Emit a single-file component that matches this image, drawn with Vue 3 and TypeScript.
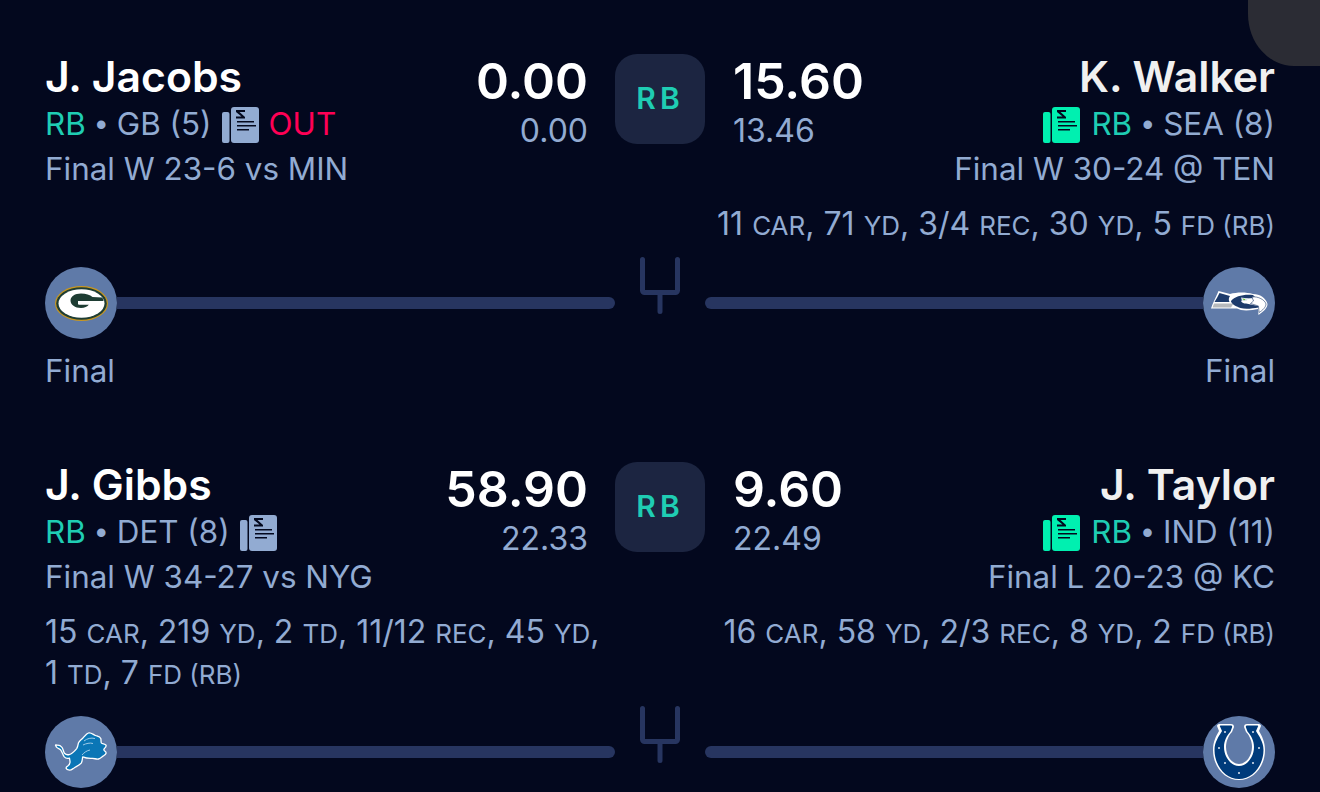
<script setup lang="ts">
interface StatPart {
  num: string
  unit?: string
}

interface Player {
  name: string
  team: string
  status?: string
  result: string
  score: string
  projected: string
  stats: StatPart[]
  logo: string
}

interface Matchup {
  pos: string
  home: Player
  away: Player
}

const matchups: Matchup[] = [
  {
    pos: 'RB',
    home: {
      name: 'J. Jacobs',
      team: 'GB (5)',
      status: 'OUT',
      result: 'Final W 23-6 vs MIN',
      score: '0.00',
      projected: '0.00',
      stats: [],
      logo: 'gb',
    },
    away: {
      name: 'K. Walker',
      team: 'SEA (8)',
      result: 'Final W 30-24 @ TEN',
      score: '15.60',
      projected: '13.46',
      stats: [
        { num: '11', unit: 'CAR' },
        { num: '71', unit: 'YD' },
        { num: '3/4', unit: 'REC' },
        { num: '30', unit: 'YD' },
        { num: '5', unit: 'FD (RB)' },
      ],
      logo: 'sea',
    },
  },
  {
    pos: 'RB',
    home: {
      name: 'J. Gibbs',
      team: 'DET (8)',
      result: 'Final W 34-27 vs NYG',
      score: '58.90',
      projected: '22.33',
      stats: [
        { num: '15', unit: 'CAR' },
        { num: '219', unit: 'YD' },
        { num: '2', unit: 'TD' },
        { num: '11/12', unit: 'REC' },
        { num: '45', unit: 'YD' },
        { num: '1', unit: 'TD' },
        { num: '7', unit: 'FD (RB)' },
      ],
      logo: 'det',
    },
    away: {
      name: 'J. Taylor',
      team: 'IND (11)',
      result: 'Final L 20-23 @ KC',
      score: '9.60',
      projected: '22.49',
      stats: [
        { num: '16', unit: 'CAR' },
        { num: '58', unit: 'YD' },
        { num: '2/3', unit: 'REC' },
        { num: '8', unit: 'YD' },
        { num: '2', unit: 'FD (RB)' },
      ],
      logo: 'ind',
    },
  },
]
</script>

<template>
  <div class="screen">
    <div class="corner"></div>

    <section v-for="(m, i) in matchups" :key="i" class="matchup">
      <div class="row">
        <div v-for="(p, side) in { home: m.home, away: m.away }" :key="side" class="player" :class="side">
          <div class="top">
            <div class="info">
              <div class="name">{{ p.name }}</div>
              <div class="meta">
                <svg v-if="side === 'away'" class="news mint" viewBox="0 0 37 36">
                  <rect x="0" y="5" width="7.5" height="31" rx="2" />
                  <rect x="9" y="0" width="28" height="36" rx="3" />
                  <path class="ink" d="M14 3h9v2h-5.500l5.500 5v1.500h-9v-2h5.500L14 5zM15 14h17v1.500H15zM15 18h19v1.500H15zM15 22h12v1.500H15z" />
                </svg>
                <span class="pos">RB</span>
                <span class="dot">•</span>
                <span>{{ p.team }}</span>
                <svg v-if="side === 'home'" class="news" viewBox="0 0 37 36">
                  <rect x="0" y="5" width="7.5" height="31" rx="2" />
                  <rect x="9" y="0" width="28" height="36" rx="3" />
                  <path class="ink" d="M14 3h9v2h-5.500l5.500 5v1.500h-9v-2h5.500L14 5zM15 14h17v1.500H15zM15 18h19v1.500H15zM15 22h12v1.500H15z" />
                </svg>
                <span v-if="p.status" class="out">{{ p.status }}</span>
              </div>
              <div class="result">{{ p.result }}</div>
            </div>
            <div class="points">
              <div class="score">{{ p.score }}</div>
              <div class="proj">{{ p.projected }}</div>
            </div>
          </div>
          <div v-if="p.stats.length" class="stats">
            <template v-for="(s, k) in p.stats" :key="k">
              {{ s.num }} <span class="unit">{{ s.unit }}</span>{{ k < p.stats.length - 1 ? ', ' : '' }}
            </template>
          </div>
        </div>
        <div class="badge">{{ m.pos }}</div>
      </div>

      <div class="track">
        <div class="side">
          <div class="logo">
            <svg v-if="m.home.logo === 'gb'" class="gb" viewBox="0 0 53 35">
              <ellipse cx="26.500" cy="17.500" rx="26.500" ry="17.500" fill="#c9971f" />
              <ellipse cx="26.500" cy="17.500" rx="25.300" ry="16.300" fill="#1e3d33" />
              <ellipse cx="26.500" cy="17.500" rx="23" ry="14.300" fill="#fff" />
              <path d="M26 7.500c5 0 9 1.300 11.500 3.500l9.500.5c1 1 1.500 2.500 1.500 3.500H23v3.500h11c-1.500 2-4.500 3.500-8 3.500-6 0-10.500-3.300-10.500-7.500S20 7.500 26 7.500z" fill="#1e3d33" />
              <path d="M24 15.500h24.500c0 1-.2 2-.7 3H24z" fill="#fff" />
            </svg>
            <svg v-else-if="m.home.logo === 'det'" class="det" viewBox="0 0 54 40">
              <path d="M1.500 13.500c2.500-.8 5 0 6.500 1.800 1.200 1.700 1.300 4.500 2.500 6 1.200 1.300 3.300 1.600 4.700 1.300 3-.6 5-3 7.500-6 1-1.500 1.300-3.300 1.700-5.600 1-2.500 3-3.300 4.500-5C31 3.500 33 1 35 .8c2.500-.3 4.500 2 6.500 2.700 2.300.8 4.500 1 5.300 3 .5 1.500-.2 3.300.7 4.600 1 1 3.700.5 4.500 2 .6 1.200-.7 2.500-1.500 3.300-.7.7-.8 1.500-.2 2.200.7.8 2 1.200 1.800 2.500-.2 1.400-1.800 2.200-3 3-1.300 1-2.700 2.500-4.600 2.900-2 .4-4.200-.7-6.300-.6-3.500.2-6.700-.3-9.500-1.500-.5 2-.2 4.500-1.500 6.300-2 2.500-5.500 3.500-7.500 5-1.300.8-2.500 2.200-4.200 2-1.500-.2-3-.6-3.400-1.900-.3-1.300.9-2 1.900-2.500 1.200-.8 1.800-2 2-3.500.2-1.500-.5-2.800-.5-4.200-1.800.6-4 .3-5.200-1.200-1.500-2-2-4.500-3.300-6.600-1-1.700-3.200-1.500-4.500-3.100-.5-.6-.7-1.500-.5-2.500z" fill="#0a76b6" stroke="#fff" stroke-width="1.300" stroke-linejoin="round" />
              <path d="M30 9c3-2.500 7-3.500 11-2.500M29 13c3-1.500 7-2.500 10-1.500M36 18c-3 .5-6 2.500-8 5" stroke="#9ccbe8" stroke-width="1" fill="none" />
            </svg>
          </div>
          <div class="bar"></div>
        </div>
        <svg class="post" viewBox="0 0 40 58">
          <path d="M2.500 3.500v31a2 2 0 0 0 2 2h31a2 2 0 0 0 2-2v-31M20 36.500v19" fill="none" stroke="#273560" stroke-width="5" stroke-linecap="round" />
        </svg>
        <div class="side">
          <div class="bar"></div>
          <div class="logo">
            <svg v-if="m.away.logo === 'sea'" class="sea" viewBox="0 0 57 24">
              <path d="M7.500 0L19 3c7-2 16-2 23 0 7 0 13 4 14.500 10 0 4-4.500 8-9 11l-.5-6c-5 1-11 2-17 1l-4-1.500H0C2 11.500 5 6 7.500 0z" fill="#fff" />
              <path d="M8.500 2L19 5c-1.500 2-1.500 4-.5 6H3.500c2-3 3.500-6 5-9z" fill="#1d3b6b" />
              <path d="M3 12.500h19.500L20 16.500H1.500z" fill="#b6b9bc" />
              <path d="M20 10c4-5 13-7 22-6l3 3-11 .5-4 2.500c1 2 3 2.500 5 2.500l12 2.500.5 1.500c-6 1-13 2-18 .5-4-1.500-8-3-9.500-6.500z" fill="#1d3b6b" />
              <path d="M30 6.500l7 1-1.500 2.500H31z" fill="#dfe6ee" />
              <path d="M31.500 7.500l3 .7-1.500 1.300z" fill="#5cc12a" />
              <path d="M41 6c6-1 13 3 14 7 0 3-3.500 6.500-7 8.500l-.5-6.500-8-2.500 3-2.500z" fill="#fff" stroke="#1d3b6b" stroke-width=".6" />
            </svg>
            <svg v-else-if="m.away.logo === 'ind'" class="ind" viewBox="0 0 54 58">
              <path d="M7 1h12c2 0 3 1 3 3l-2 5c-4 4-6 10-6 15 0 9 6 17 13 17s13-8 13-17c0-5-2-11-6-15l-2-5c0-2 1-3 3-3h12c1 0 2 1 2 2l-2 5c3 5 6 11 6 19 0 16-11 30-26 30S1 43 1 27C1 19 4 13 7 8L5 3c0-1 1-2 2-2z" fill="#fff" />
              <path d="M8.500 2.500h10c1.500 0 2 1 1.500 2l-1.500 4C14.500 13 12 18 12 24c0 10 7 19 15 19s15-9 15-19c0-6-2.500-11-6.500-15.500L34 4.500c-.5-1 0-2 1.500-2h10c.5 0 1 .5.500 1L44 8c3 5 7.500 11 7.500 19 0 15-10.500 29-24.500 29S2.500 42 2.500 27c0-8 4.500-14 7.500-19L8 3.500c-.5-.5 0-1 .5-1z" fill="#003b7b" />
              <g fill="#dfe7f0">
                <circle cx="13" cy="9" r="1" /><circle cx="41" cy="9" r="1" /><circle cx="7" cy="25" r="1" /><circle cx="47" cy="25" r="1" />
                <circle cx="13" cy="40" r="1" /><circle cx="41" cy="40" r="1" /><circle cx="27" cy="50" r="1" />
              </g>
            </svg>
          </div>
        </div>
      </div>

      <!-- second row's status falls below the fold in the screenshot -->
      <div v-if="i === 0" class="status">
        <span>Final</span>
        <span>Final</span>
      </div>
    </section>
  </div>
</template>

<style>
html,
body {
  margin: 0;
  background: #03081e;
  overflow: hidden;
}
</style>

<style scoped>
.screen {
  position: relative;
  height: 792px;
  padding: 53px 45px 0;
  box-sizing: border-box;
  overflow: hidden;
  background: #03081e;
  font-family: Inter, "Liberation Sans", sans-serif;
  color: #92abd2;
  font-size: 31.4px;
}

.corner {
  position: absolute;
  top: 0;
  right: 0;
  width: 72px;
  height: 66px;
  background: #2b2c34;
  border-bottom-left-radius: 46px 52px;
}

.matchup {
  margin-bottom: 67px;
}

.row {
  display: grid;
  grid-template-columns: 1fr 90px 1fr;
}

.player.home {
  grid-column: 1;
  grid-row: 1;
}

.player.away {
  grid-column: 3;
  grid-row: 1;
}

.badge {
  grid-column: 2;
  grid-row: 1;
  align-self: start;
  height: 90px;
  margin-top: 1px;
  padding-bottom: 2px;
  box-sizing: border-box;
  display: flex;
  align-items: center;
  justify-content: center;
  border-radius: 22px;
  background: #1c2541;
  color: #1fcdb3;
  font-size: 30px;
  font-weight: 600;
  letter-spacing: 4px;
}

.top {
  display: flex;
  justify-content: space-between;
}

.away .top {
  flex-direction: row-reverse;
}

.away .info {
  text-align: right;
}

.name {
  font-size: 42.7px;
  line-height: 47px;
  margin-bottom: 2px;
  font-weight: 600;
  color: #fff;
}

.away .name {
  color: #f0f0f0;
}

.meta {
  display: flex;
  align-items: center;
  height: 45px;
  line-height: 45px;
  white-space: nowrap;
}

.away .meta {
  justify-content: flex-end;
}

.pos {
  color: #1fcdb3;
}

.dot {
  font-family: "Liberation Sans", sans-serif;
  margin: 0 10px;
}

.out {
  color: #ff0055;
}

.news {
  width: 37px;
  height: 36px;
  fill: #92abd2;
  margin: 0 10px;
}

.news.mint {
  fill: #00f0b0;
  margin: 0 11px 0 0;
}

.news .ink {
  fill: #03081e;
}

.result {
  line-height: 45px;
  white-space: nowrap;
}

.points {
  padding-right: 27px;
  text-align: right;
}

.away .points {
  padding: 0 0 0 28px;
  text-align: left;
}

.score {
  font-size: 50px;
  line-height: 56px;
  font-weight: 600;
  color: #fff;
}

.proj {
  font-size: 32px;
  line-height: 44px;
}

.stats {
  margin-top: 12px;
  font-size: 32px;
  line-height: 40.5px;
}

.away .stats {
  text-align: right;
}

.unit {
  font-size: 26px;
  line-height: 1;
}

.track {
  display: grid;
  grid-template-columns: 1fr 90px 1fr;
  align-items: center;
  height: 72px;
  margin-top: 22.5px;
}

.side {
  display: flex;
  align-items: center;
}

.logo {
  flex: none;
  width: 72px;
  height: 72px;
  border-radius: 50%;
  background: #5f7aa8;
  display: flex;
  align-items: center;
  justify-content: center;
}

.bar {
  flex: 1;
  height: 12px;
  background: #273560;
  border-radius: 0 6px 6px 0;
}

.side:last-child .bar {
  border-radius: 6px 0 0 6px;
}

.post {
  justify-self: center;
  align-self: start;
  width: 40px;
  height: 58px;
  margin-top: -11px;
}

.gb {
  width: 53px;
  height: 35px;
}

.det {
  width: 54px;
  height: 40px;
}

.sea {
  width: 57px;
  height: 24px;
}

.ind {
  width: 54px;
  height: 58px;
}

.status {
  display: flex;
  justify-content: space-between;
  margin-top: 10px;
  line-height: 45px;
}
</style>
